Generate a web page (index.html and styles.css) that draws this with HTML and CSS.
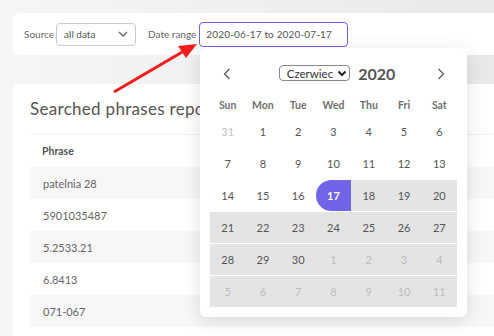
FILE: index.html
```html
<!DOCTYPE html>
<html lang="en">
<head>
    <meta charset="UTF-8">
    <meta name="viewport" content="width=device-width, initial-scale=1.0">
    <title>Searched phrases report</title>
    <link rel="stylesheet" href="styles.css">
</head>
<body>
    <div class="page">
        <div class="filters">
            <label class="field-label">Source</label>
            <div class="select">
                <span>all data</span>
                <svg width="10" height="6" viewBox="0 0 10 6"><path d="M1 1l4 4 4-4" fill="none" stroke="#666" stroke-width="1.3"/></svg>
            </div>
            <label class="field-label date-label">Date range</label>
            <div class="date-input">2020-06-17 to 2020-07-17</div>
        </div>

        <div class="report">
            <h2>Searched phrases report</h2>
            <table class="phrases">
                <thead>
                    <tr><th>Phrase</th></tr>
                </thead>
                <tbody>
                    <tr><td>patelnia 28</td></tr>
                    <tr><td>5901035487</td></tr>
                    <tr><td>5.2533.21</td></tr>
                    <tr><td>6.8413</td></tr>
                    <tr><td>071-067</td></tr>
                    <tr><td>&nbsp;</td></tr>
                </tbody>
            </table>
        </div>
    </div>

    <!-- calendar popup -->
    <div class="calendar">
        <div class="cal-head">
            <span class="nav">
                <svg width="8" height="12" viewBox="0 0 8 12"><path d="M6.5 1L1.5 6l5 5" fill="none" stroke="#555" stroke-width="1.2"/></svg>
            </span>
            <div class="month">
                <span class="month-select">Czerwiec <svg width="10" height="7" viewBox="0 0 10 7"><path d="M1.5 1.5L5 5l3.5-3.5" fill="none" stroke="#222" stroke-width="2"/></svg></span>
                <span class="year">2020</span>
            </div>
            <span class="nav">
                <svg width="8" height="12" viewBox="0 0 8 12"><path d="M1.5 1l5 5-5 5" fill="none" stroke="#555" stroke-width="1.2"/></svg>
            </span>
        </div>
        <div class="weekdays">
            <span>Sun</span><span>Mon</span><span>Tue</span><span>Wed</span><span>Thu</span><span>Fri</span><span>Sat</span>
        </div>
        <div class="days" id="days"></div>
    </div>

    <svg class="pointer" width="100" height="60" viewBox="0 0 100 60">
        <line x1="2" y1="54" x2="72" y2="13" stroke="#f21c1c" stroke-width="3"/>
        <polygon points="85,6 66,8 74,20" fill="#f21c1c"/>
    </svg>

    <script>
        const days = document.getElementById('days');
        // June 2020 grid, 31 May .. 11 July
        const cells = [];
        cells.push({ n: 31, cls: 'muted' });
        for (let d = 1; d <= 30; d++) cells.push({ n: d, cls: '' });
        for (let d = 1; d <= 11; d++) cells.push({ n: d, cls: 'muted' });

        cells.forEach((c, i) => {
            const el = document.createElement('span');
            el.textContent = c.n;
            el.className = 'day ' + c.cls;
            if (i === 17) el.classList.add('start');
            else if (i > 17) el.classList.add('in-range');
            days.appendChild(el);
        });
    </script>
</body>
</html>
```

FILE: styles.css
```css
body {
    margin: 0;
    font-family: "Lato", "DejaVu Sans", sans-serif;
    background: linear-gradient(to right, #f6f6f6, #e9e9e9);
    color: #555;
    overflow: hidden;
    width: 494px;
    height: 336px;
    position: relative;
}

.page {
    padding: 13px 0 0 13px;
    width: 540px;
}

.filters {
    background-color: white;
    border-radius: 6px;
    height: 42px;
    display: flex;
    align-items: center;
    padding: 0 11px;
}

.field-label {
    font-size: 10px;
    color: #666;
    margin-right: 2px;
}

.date-label {
    margin-left: 12px;
    margin-right: 3px;
}

.select {
    width: 80px;
    height: 23px;
    box-sizing: border-box;
    border: 1px solid #c9c9c9;
    border-radius: 4px;
    display: flex;
    align-items: center;
    justify-content: space-between;
    padding: 0 7px 0 7px;
    font-size: 10px;
    color: #555;
}

.date-input {
    width: 149px;
    height: 25px;
    box-sizing: border-box;
    border: 1px solid #6f61e6;
    border-radius: 4px;
    display: flex;
    align-items: center;
    padding: 0 6px;
    font-size: 10px;
    color: #555;
    white-space: nowrap;
    letter-spacing: 0.15px;
}

.report {
    margin-top: 29px;
    background-color: white;
    border-radius: 6px;
    padding: 14px 18px 0 17px;
    height: 260px;
}

.report h2 {
    margin: 0 0 15px 0;
    font-size: 17px;
    font-weight: 400;
    color: #555;
    letter-spacing: 0.3px;
}

.phrases {
    width: 100%;
    border-collapse: collapse;
    border-top: 1px solid #f0f0f0;
}

.phrases th {
    text-align: left;
    font-size: 10.5px;
    font-weight: 700;
    color: #555;
    height: 32px;
    padding: 0 12px;
}

.phrases td {
    font-size: 11px;
    color: #666;
    height: 32px;
    padding: 0 13px;
}

.phrases tbody tr:nth-child(odd) {
    background-color: #f7f7f7;
}

.calendar {
    position: absolute;
    left: 200px;
    top: 48px;
    width: 267px;
    box-sizing: border-box;
    background-color: white;
    border-radius: 6px;
    box-shadow: 0 4px 18px rgba(0, 0, 0, 0.13);
    padding: 0 10px 10px;
}

.cal-head {
    display: flex;
    align-items: center;
    justify-content: space-between;
    height: 50px;
    padding: 0 12px 0 13px;
}

.month {
    display: flex;
    align-items: center;
    gap: 8px;
    margin-left: 6px;
}

.month-select {
    display: inline-flex;
    align-items: center;
    gap: 4px;
    border: 1px solid #888;
    border-radius: 4px;
    height: 14px;
    padding: 0 2px 0 7px;
    font-size: 11.5px;
    color: #333;
}

.year {
    font-size: 16px;
    font-weight: 700;
    color: #555;
}

.weekdays {
    display: grid;
    grid-template-columns: repeat(7, 1fr);
    height: 14px;
    align-items: center;
    margin-bottom: 4px;
}

.weekdays span {
    text-align: center;
    font-size: 10.5px;
    font-weight: 700;
    color: #707070;
}

.days {
    display: grid;
    grid-template-columns: repeat(7, 1fr);
    grid-auto-rows: 31px;
    row-gap: 1px;
}

.day {
    display: flex;
    align-items: center;
    justify-content: center;
    font-size: 11px;
    color: #555;
}

.day.muted {
    color: #c4c4c4;
}

.day.in-range {
    background-color: #e4e4e4;
}

.day.in-range.muted {
    color: #bdbdbd;
}

.day.start {
    background-color: #7064e8;
    color: white;
    font-weight: 700;
    border-radius: 16px 0 0 16px;
}

.pointer {
    position: absolute;
    left: 112px;
    top: 38px;
}
```
